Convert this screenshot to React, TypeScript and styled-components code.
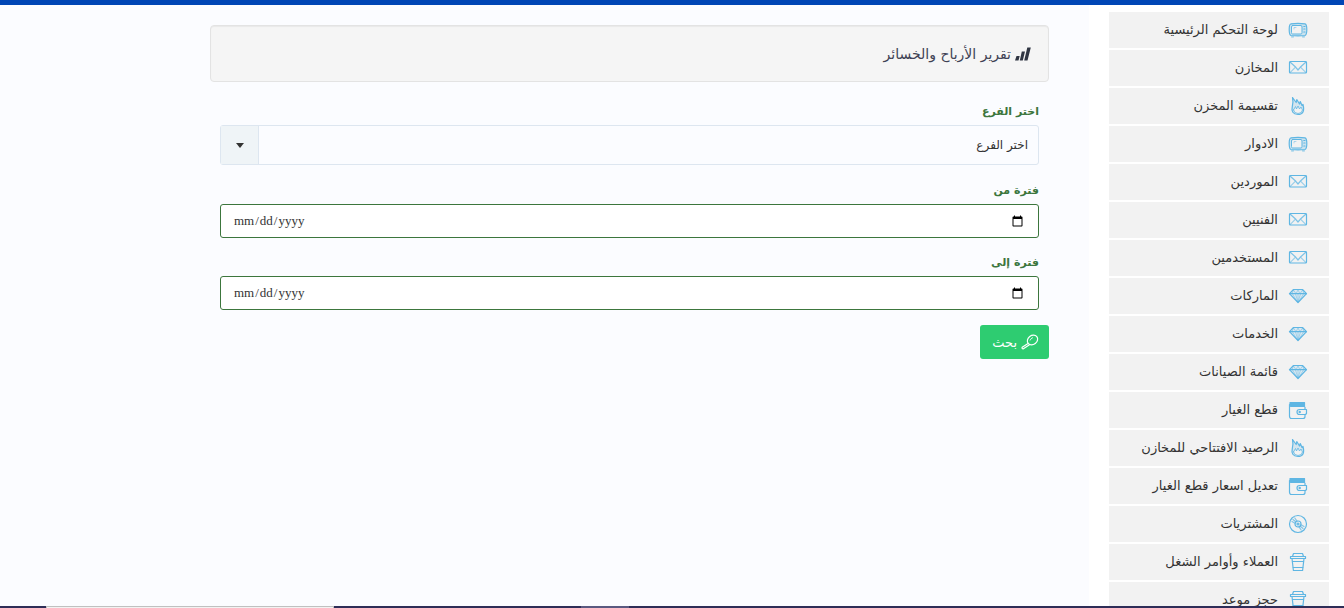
import React from "react";
import styled, { createGlobalStyle } from "styled-components";

const GlobalStyle = createGlobalStyle`
  *, *::before, *::after { box-sizing: border-box; }
  html, body { margin: 0; padding: 0; }
  body {
    background: #ffffff;
    color: #333333;
    font-family: "DejaVu Sans", sans-serif;
    font-size: 13px;
    overflow: hidden;
  }
`;

const Page = styled.div`
  display: flex;
  flex-direction: column;
  height: 100vh;
`;

const TopBar = styled.header`
  flex: none;
  height: 5px;
  background: #0046b5;
`;

const Body = styled.div`
  display: flex;
  flex: 1;
  min-height: 0;
`;

const Sidebar = styled.nav`
  flex: none;
  width: 255px;
  padding: 7px 15px 0 20px;
  overflow: hidden;
`;

const Menu = styled.ul`
  display: flex;
  flex-direction: column;
  gap: 2px;
  margin: 0;
  padding: 0;
  list-style: none;
`;

const MenuLink = styled.a`
  display: flex;
  align-items: center;
  gap: 10px;
  height: 36px;
  padding: 0 21px;
  background: #f2f2f2;
  color: #333333;
  line-height: 20px;
  text-decoration: none;
  white-space: nowrap;
`;

const MenuIcon = styled.svg`
  flex: none;
  width: 20px;
  height: 20px;
  fill: none;
  stroke: #5fb6e3;
  stroke-width: 1.2;
  stroke-linejoin: round;
  stroke-linecap: round;
`;

const Content = styled.main`
  flex: 1;
  min-width: 0;
  padding: 20px 40px 0 210px;
  background: #fbfcff;
`;

const Heading = styled.h1`
  display: flex;
  align-items: center;
  gap: 4px;
  height: 57px;
  margin: 0 0 20px;
  padding: 0 17px;
  border: 1px solid #e3e3e3;
  border-radius: 4px;
  background: #f5f5f5;
  box-shadow: inset 0 1px 1px rgba(0, 0, 0, 0.05);
  color: #3f4254;
  font-size: 14px;
  font-weight: 400;
`;

const Form = styled.form`
  margin: 0;
`;

const Field = styled.div`
  display: flex;
  flex-direction: column;
  gap: 4px;
  margin-bottom: 15px;
  padding: 0 10px;
`;

const Label = styled.label`
  color: #3c763d;
  font-size: 11px;
  font-weight: 700;
  line-height: 19px;
`;

const SelectBox = styled.div`
  position: relative;
  padding-bottom: 1px;
`;

const Select = styled.select`
  display: block;
  width: 100%;
  height: 40px;
  padding: 0 10px 0 48px;
  appearance: none;
  border: 1px solid #dde6f0;
  border-radius: 3px;
  background: #fbfcff;
  color: #333333;
  font-family: inherit;
  font-size: 12px;
`;

const SelectArrow = styled.span`
  position: absolute;
  top: 1px;
  left: 1px;
  display: flex;
  align-items: center;
  justify-content: center;
  width: 38px;
  height: 38px;
  border-right: 1px solid #dde6f0;
  background: #eff4f7;
  pointer-events: none;

  &::before {
    content: "";
    border: 4px solid transparent;
    border-top: 5px solid #333333;
    border-bottom: 0;
  }
`;

const DateInput = styled.input`
  display: block;
  width: 100%;
  height: 34px;
  padding: 6px 12px;
  border: 1px solid #3c763d;
  border-radius: 3px;
  background: #ffffff;
  color: #333333;
  direction: ltr;
  font-family: "Liberation Serif", serif;
  font-size: 13px;
`;

const SearchButton = styled.button`
  display: flex;
  align-items: center;
  gap: 4px;
  height: 34px;
  padding: 0 10px 0 12px;
  border: 0;
  border-radius: 3px;
  background: #2ecc71;
  color: #ffffff;
  font-family: inherit;
  font-size: 13px;
`;

const Taskbar = styled.div`
  position: fixed;
  right: 0;
  bottom: 0;
  left: 0;
  display: flex;
  height: 2px;
  padding-left: 46px;
  background: #2e2d57;
  direction: ltr;
`;

const TaskSearch = styled.span`
  width: 288px;
  margin-right: 247px;
  border: 1px solid #c0c0c0;
  border-bottom: 0;
  background: #f2f2f2;
`;

const TaskActive = styled.span`
  width: 48px;
  background: #5a5980;
`;

type IconName = "tv" | "mail" | "fire" | "gem" | "wallet" | "disc" | "cup";

const drawings: Record<IconName, React.ReactNode> = {
  tv: (
    <>
      <path d="M3 3.800Q10 2.800 17 3.800Q18.800 4.200 18.800 9.500T17 15.500Q10 16.400 3 15.500Q1.200 15.100 1.200 9.500T3 3.800Z" fill="#5fb6e3" fillOpacity=".25" />
      <path d="M4.500 5.500H13Q14 5.500 14 7V12.500Q14 14 13 14H4.500Q3.500 14 3.500 12.500V7Q3.500 5.500 4.500 5.500Z" fill="#f2f2f2" strokeWidth="1" />
      <path d="M15.800 6.500h1.200M15.800 9h1.200M15.800 12h1.200" />
      <path d="M3.500 16.800h2M14.500 16.800h2" opacity=".7" />
      <path d="M6 9V7.500h2" opacity=".6" strokeWidth=".8" />
    </>
  ),
  mail: (
    <>
      <rect x="1.500" y="3.500" width="17" height="11.500" rx="1" />
      <path d="M2 4l5.800 5.300L10 12l2.200-2.700L18 4" opacity=".8" />
      <path d="M2.300 14.300L7 9.600M17.700 14.300L13 9.600" opacity=".6" />
    </>
  ),
  fire: (
    <>
      <path d="M4.500 1.500L8.200 6.500 8.800 3.500 11.500 8 12.300 5.500 14 9.500 15 8.500Q17.500 18.500 10 18.500Q2.500 18 4.300 10.500Q5.500 6 4.500 1.500Z" fill="#5fb6e3" fillOpacity=".2" />
      <path d="M5.500 14L7.500 10.500 8.500 13 10 10 11.500 13 13 11 14.500 14Q14 17.500 10 17.500T5.500 14Z" fill="#f2f2f2" strokeWidth=".8" />
    </>
  ),
  gem: (
    <>
      <path d="M5.500 3.500h9l4 4.200L10 16.500 1.500 7.700Z" fill="#5fb6e3" fillOpacity=".15" />
      <path d="M1.500 7.700h17" />
      <path d="M4 7.700L5.500 4 8 7.700 10 4l2 3.700L14.500 4 16 7.700M4.500 8l5 8M7.500 8L10 16l2.500-8M15.500 8l-5 8M10 8v8" opacity=".6" strokeWidth=".8" />
    </>
  ),
  wallet: (
    <>
      <path d="M2 2.500h14.500V6H2Z" fill="#5fb6e3" />
      <path d="M16.500 6.500H3Q1.500 6 1.500 4.500V16Q1.500 18.500 3.500 18.500H15Q17 18.500 17 16.500V14.500M17 9.500V7" />
      <path d="M18.500 9.500H11.500a2.500 2.500 0 000 5H17.500L18.500 13.500Z" />
      <circle cx="11.700" cy="12" r=".6" />
    </>
  ),
  disc: (
    <>
      <circle cx="10" cy="10" r="8.500" />
      <circle cx="10" cy="10" r="3" />
      <circle cx="10" cy="10" r="1" />
      <path d="M4 7.500L7 9.200M5 5.500L8 8M6.800 4L9 7.200M16 12.500l-3-1.700M15 14.500L12 12M13.200 16L11 12.800" opacity=".75" />
    </>
  ),
  cup: (
    <>
      <path d="M4.500 4.500L5.500 1.500h9l1 3M2.500 4.500h15v2h-15ZM4 6.500l1.400 12h9.200L16 6.500" />
      <path d="M4.500 9.500h11M5.200 15.500h9.600" />
    </>
  ),
};

const menuItems: { icon: IconName; text: string }[] = [
  { icon: "tv", text: "لوحة التحكم الرئيسية" },
  { icon: "mail", text: "المخازن" },
  { icon: "fire", text: "تقسيمة المخزن" },
  { icon: "tv", text: "الادوار" },
  { icon: "mail", text: "الموردين" },
  { icon: "mail", text: "الفنيين" },
  { icon: "mail", text: "المستخدمين" },
  { icon: "gem", text: "الماركات" },
  { icon: "gem", text: "الخدمات" },
  { icon: "gem", text: "قائمة الصيانات" },
  { icon: "wallet", text: "قطع الغيار" },
  { icon: "fire", text: "الرصيد الافتتاحي للمخازن" },
  { icon: "wallet", text: "تعديل اسعار قطع الغيار" },
  { icon: "disc", text: "المشتريات" },
  { icon: "cup", text: "العملاء وأوامر الشغل" },
  { icon: "cup", text: "حجز موعد" },
];

export default function App() {
  return (
    <>
      <GlobalStyle />
      <Page dir="rtl" lang="ar">
        <TopBar />
        <Body>
          <Sidebar>
            <Menu>
              {menuItems.map((item) => (
                <li key={item.text}>
                  <MenuLink href="#">
                    <MenuIcon viewBox="0 0 20 20" aria-hidden="true">
                      {drawings[item.icon]}
                    </MenuIcon>
                    {item.text}
                  </MenuLink>
                </li>
              ))}
            </Menu>
          </Sidebar>
          <Content>
            <Heading>
              <svg width="16" height="14" viewBox="0 0 16 14" fill="#2f3542" aria-hidden="true">
                <path d="M1.500 9h3.200L3.500 13.500H0ZM6.800 4.500h3.200L7.800 13.500H4.800ZM12.300.5h3.500L12.500 13.500H9.200Z" />
              </svg>
              تقرير الأرباح والخسائر
            </Heading>
            <Form>
              <Field>
                <Label htmlFor="branch">اختر الفرع</Label>
                <SelectBox>
                  <Select id="branch">
                    <option>اختر الفرع</option>
                  </Select>
                  <SelectArrow />
                </SelectBox>
              </Field>
              <Field>
                <Label htmlFor="from">فترة من</Label>
                <DateInput id="from" type="date" />
              </Field>
              <Field>
                <Label htmlFor="to">فترة إلى</Label>
                <DateInput id="to" type="date" />
              </Field>
              <SearchButton type="button">
                <svg width="18" height="16" viewBox="0 0 18 16" fill="none" stroke="#ffffff" strokeWidth="1.200" strokeLinejoin="round" aria-hidden="true">
                  <ellipse cx="11.500" cy="6" rx="5.500" ry="4.500" transform="rotate(-38 11.500 6)" />
                  <path d="M7 9.500L1.200 13.200Q.5 14.500 2 15L8.500 10.800" />
                  <path d="M9 6.500Q9.500 4.500 12 3.500" strokeWidth=".8" />
                </svg>
                بحث
              </SearchButton>
            </Form>
          </Content>
        </Body>
        <Taskbar>
          <TaskSearch />
          <TaskActive />
        </Taskbar>
      </Page>
    </>
  );
}
